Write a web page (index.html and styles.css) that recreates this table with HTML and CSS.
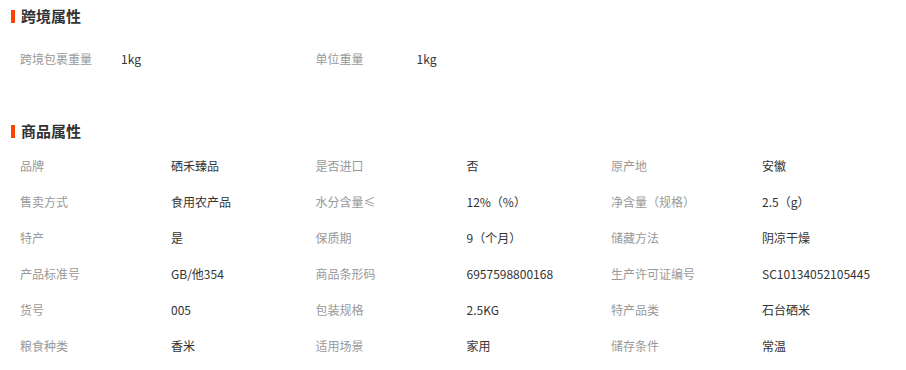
FILE: index.html
```html
<!DOCTYPE html>
<html lang="zh-CN">
<head>
<meta charset="utf-8">
<link rel="stylesheet" href="styles.css">
</head>
<body>
<section class="sec sec-cross">
  <h2 class="title">跨境属性</h2>
  <div class="grid narrow">
    <div class="item"><span class="label">跨境包裹重量</span><span class="value">1kg</span></div>
    <div class="item"><span class="label">单位重量</span><span class="value">1kg</span></div>
  </div>
</section>
<section class="sec">
  <h2 class="title">商品属性</h2>
  <div class="grid">
    <div class="item"><span class="label">品牌</span><span class="value">硒禾臻品</span></div>
    <div class="item"><span class="label">是否进口</span><span class="value">否</span></div>
    <div class="item"><span class="label">原产地</span><span class="value">安徽</span></div>
    <div class="item"><span class="label">售卖方式</span><span class="value">食用农产品</span></div>
    <div class="item"><span class="label">水分含量≤</span><span class="value">12%（%）</span></div>
    <div class="item"><span class="label">净含量（规格）</span><span class="value">2.5（g）</span></div>
    <div class="item"><span class="label">特产</span><span class="value">是</span></div>
    <div class="item"><span class="label">保质期</span><span class="value">9（个月）</span></div>
    <div class="item"><span class="label">储藏方法</span><span class="value">阴凉干燥</span></div>
    <div class="item"><span class="label">产品标准号</span><span class="value">GB/他354</span></div>
    <div class="item"><span class="label">商品条形码</span><span class="value">6957598800168</span></div>
    <div class="item"><span class="label">生产许可证编号</span><span class="value">SC10134052105445</span></div>
    <div class="item"><span class="label">货号</span><span class="value">005</span></div>
    <div class="item"><span class="label">包装规格</span><span class="value">2.5KG</span></div>
    <div class="item"><span class="label">特产品类</span><span class="value">石台硒米</span></div>
    <div class="item"><span class="label">粮食种类</span><span class="value">香米</span></div>
    <div class="item"><span class="label">适用场景</span><span class="value">家用</span></div>
    <div class="item"><span class="label">储存条件</span><span class="value">常温</span></div>
  </div>
</section>
</body>
</html>
```
FILE: styles.css
```css
* { box-sizing: border-box; }
html, body { margin: 0; padding: 0; background: #fff; }
body {
  width: 906px;
  font-family: "Noto Sans CJK SC", "Noto Sans", sans-serif;
  font-size: 12px;
  color: #333;
}
.sec-cross { margin-bottom: 39px; }
.title {
  margin: 0;
  height: 32px;
  line-height: 32px;
  font-size: 15px;
  font-weight: bold;
  color: #333;
  display: flex;
  align-items: center;
  padding-left: 11px;
}
.title::before {
  content: "";
  display: block;
  width: 4px;
  height: 13px;
  background: #ff4400;
  margin-right: 6px;
}
.grid {
  display: grid;
  grid-template-columns: repeat(3, 295.5px);
  padding-left: 20px;
}
.narrow { margin-top: 8px; }
.item {
  display: flex;
  align-items: center;
  height: 36px;
}
.label {
  width: 151px;
  color: #999;
  flex-shrink: 0;
}
.narrow .label { width: 101px; }
.value { color: #333; }
```
